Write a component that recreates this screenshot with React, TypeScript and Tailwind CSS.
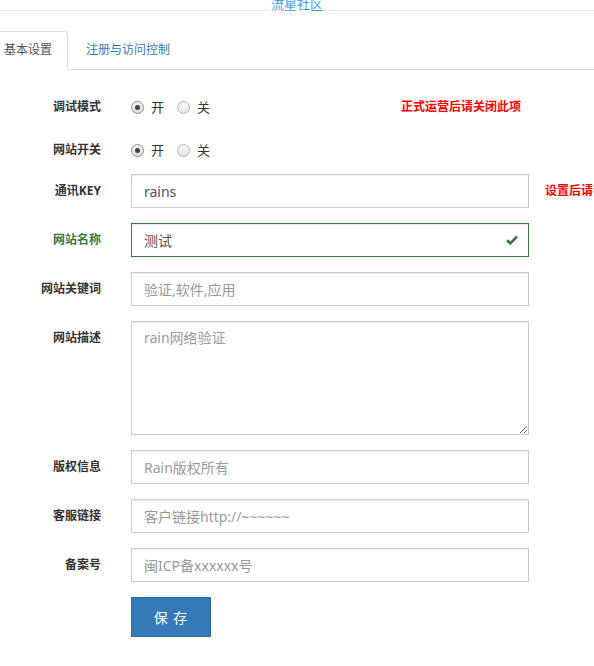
import React from "react";

function Radio({ checked, label }: { checked: boolean; label: string }) {
  return (
    <div className="flex items-center">
      <span
        className={
          checked
            ? "flex h-[13px] w-[13px] items-center justify-center rounded-full border border-[#8e8e8e] bg-gradient-to-b from-[#f4f4f4] to-[#dcdcdc]"
            : "flex h-[13px] w-[13px] items-center justify-center rounded-full border border-[#b4b4b4] bg-gradient-to-b from-[#fafafa] to-[#e4e4e4]"
        }
      >
        {checked && <span className="h-[5px] w-[5px] rounded-full bg-[#444]" />}
      </span>
      <span className="ml-[7px] text-[13px] leading-[18px] text-[#333]">{label}</span>
    </div>
  );
}

function Label({ children, green }: { children: React.ReactNode; green?: boolean }) {
  return (
    <div
      className={
        "w-[101px] shrink-0 text-right text-[12px] font-bold leading-[18px] " +
        (green ? "text-[#3c763d]" : "text-[#333]")
      }
    >
      {children}
    </div>
  );
}

const inputCls =
  "block h-[34px] w-[398px] border border-[#ccc] bg-white px-[12px] text-[14px] text-[#555] outline-none shadow-[inset_0_1px_1px_rgba(0,0,0,0.075)] placeholder:text-[#999]";

function InputRow({ label, value, placeholder }: { label: string; value?: string; placeholder?: string }) {
  return (
    <div className="mb-[15px] flex items-center">
      <Label>{label}</Label>
      <div className="ml-[30px]">
        <input readOnly className={inputCls} defaultValue={value} placeholder={placeholder} />
      </div>
    </div>
  );
}

export default function App() {
  return (
    <div
      className="h-[666px] w-[594px] overflow-hidden bg-white"
      style={{ fontFamily: '"Noto Sans", "Noto Sans CJK SC", sans-serif' }}
    >
      {/* header */}
      <div className="flex h-[11px] items-start">
        <div className="h-full flex-1 border-b border-[#e8e8e8]" />
        <span className="-mt-[2px] bg-white px-[2px] text-[13px] leading-[13px] text-[#3ea1ec]">流星社区</span>
        <div className="h-full flex-1 border-b border-[#e8e8e8]" />
      </div>

      {/* tabs */}
      <div className="ml-[-12px] mt-[20px] flex border-b border-[#ddd]">
        <div className="mb-[-1px] rounded-t-[4px] border border-[#ddd] border-b-white bg-white px-[15px] py-[10px] text-[12px] leading-[16px] text-[#555]">
          基本设置
        </div>
        <div className="ml-[2px] border border-transparent px-[15px] py-[10px] text-[12px] leading-[16px] text-[#337ab7]">
          注册与访问控制
        </div>
      </div>

      {/* form */}
      <div className="pt-[23px]">
        <div className="mb-[15px] flex h-[28px] items-center">
          <Label>调试模式</Label>
          <div className="ml-[30px] flex w-[270px] items-center gap-[13px]">
            <Radio checked label="开" />
            <Radio checked={false} label="关" />
          </div>
          <div className="whitespace-nowrap text-[12px] font-bold text-[#f00]">正式运营后请关闭此项</div>
        </div>

        <div className="mb-[10px] flex h-[28px] items-center">
          <Label>网站开关</Label>
          <div className="ml-[30px] flex items-center gap-[13px]">
            <Radio checked label="开" />
            <Radio checked={false} label="关" />
          </div>
        </div>

        <div className="mb-[15px] flex items-center">
          <Label>通讯KEY</Label>
          <div className="ml-[30px]">
            <input readOnly className={inputCls} defaultValue="rains" />
          </div>
          <div className="ml-[16px] whitespace-nowrap text-[12px] font-bold text-[#f00]">设置后请不要修改</div>
        </div>

        <div className="mb-[15px] flex items-center">
          <Label green>网站名称</Label>
          <div className="relative ml-[30px]">
            <input
              readOnly
              className="block h-[34px] w-[398px] border border-[#3c763d] bg-white px-[12px] pr-[42px] text-[14px] text-[#555] outline-none shadow-[inset_0_1px_1px_rgba(0,0,0,0.075)]"
              defaultValue="测试"
            />
            <span className="absolute right-0 top-0 flex h-[34px] w-[34px] items-center justify-center">
              <svg width="12" height="10" viewBox="0 0 12 10">
                <path d="M1 5.2 L4.3 8.3 L11 1.5" fill="none" stroke="#3c763d" strokeWidth="2.6" />
              </svg>
            </span>
          </div>
        </div>

        <InputRow label="网站关键词" placeholder="验证,软件,应用" />

        <div className="mb-[15px] flex items-start">
          <div className="pt-[8px]">
            <Label>网站描述</Label>
          </div>
          <div className="ml-[30px]">
            <textarea
              readOnly
              className="block h-[114px] w-[398px] border border-[#ccc] bg-white px-[12px] py-[6px] text-[14px] leading-[20px] text-[#555] outline-none shadow-[inset_0_1px_1px_rgba(0,0,0,0.075)] placeholder:text-[#999]"
              placeholder="rain网络验证"
            />
          </div>
        </div>

        <InputRow label="版权信息" placeholder="Rain版权所有" />
        <InputRow label="客服链接" placeholder="客户链接http://~~~~~~" />
        <InputRow label="备案号" placeholder="闽ICP备xxxxxx号" />

        <div className="flex">
          <div className="ml-[131px] flex h-[40px] w-[80px] items-center justify-center border border-[#2e6da4] bg-[#337ab7] text-[14px] tracking-[1px] text-white">
            保 存
          </div>
        </div>
      </div>
    </div>
  );
}
